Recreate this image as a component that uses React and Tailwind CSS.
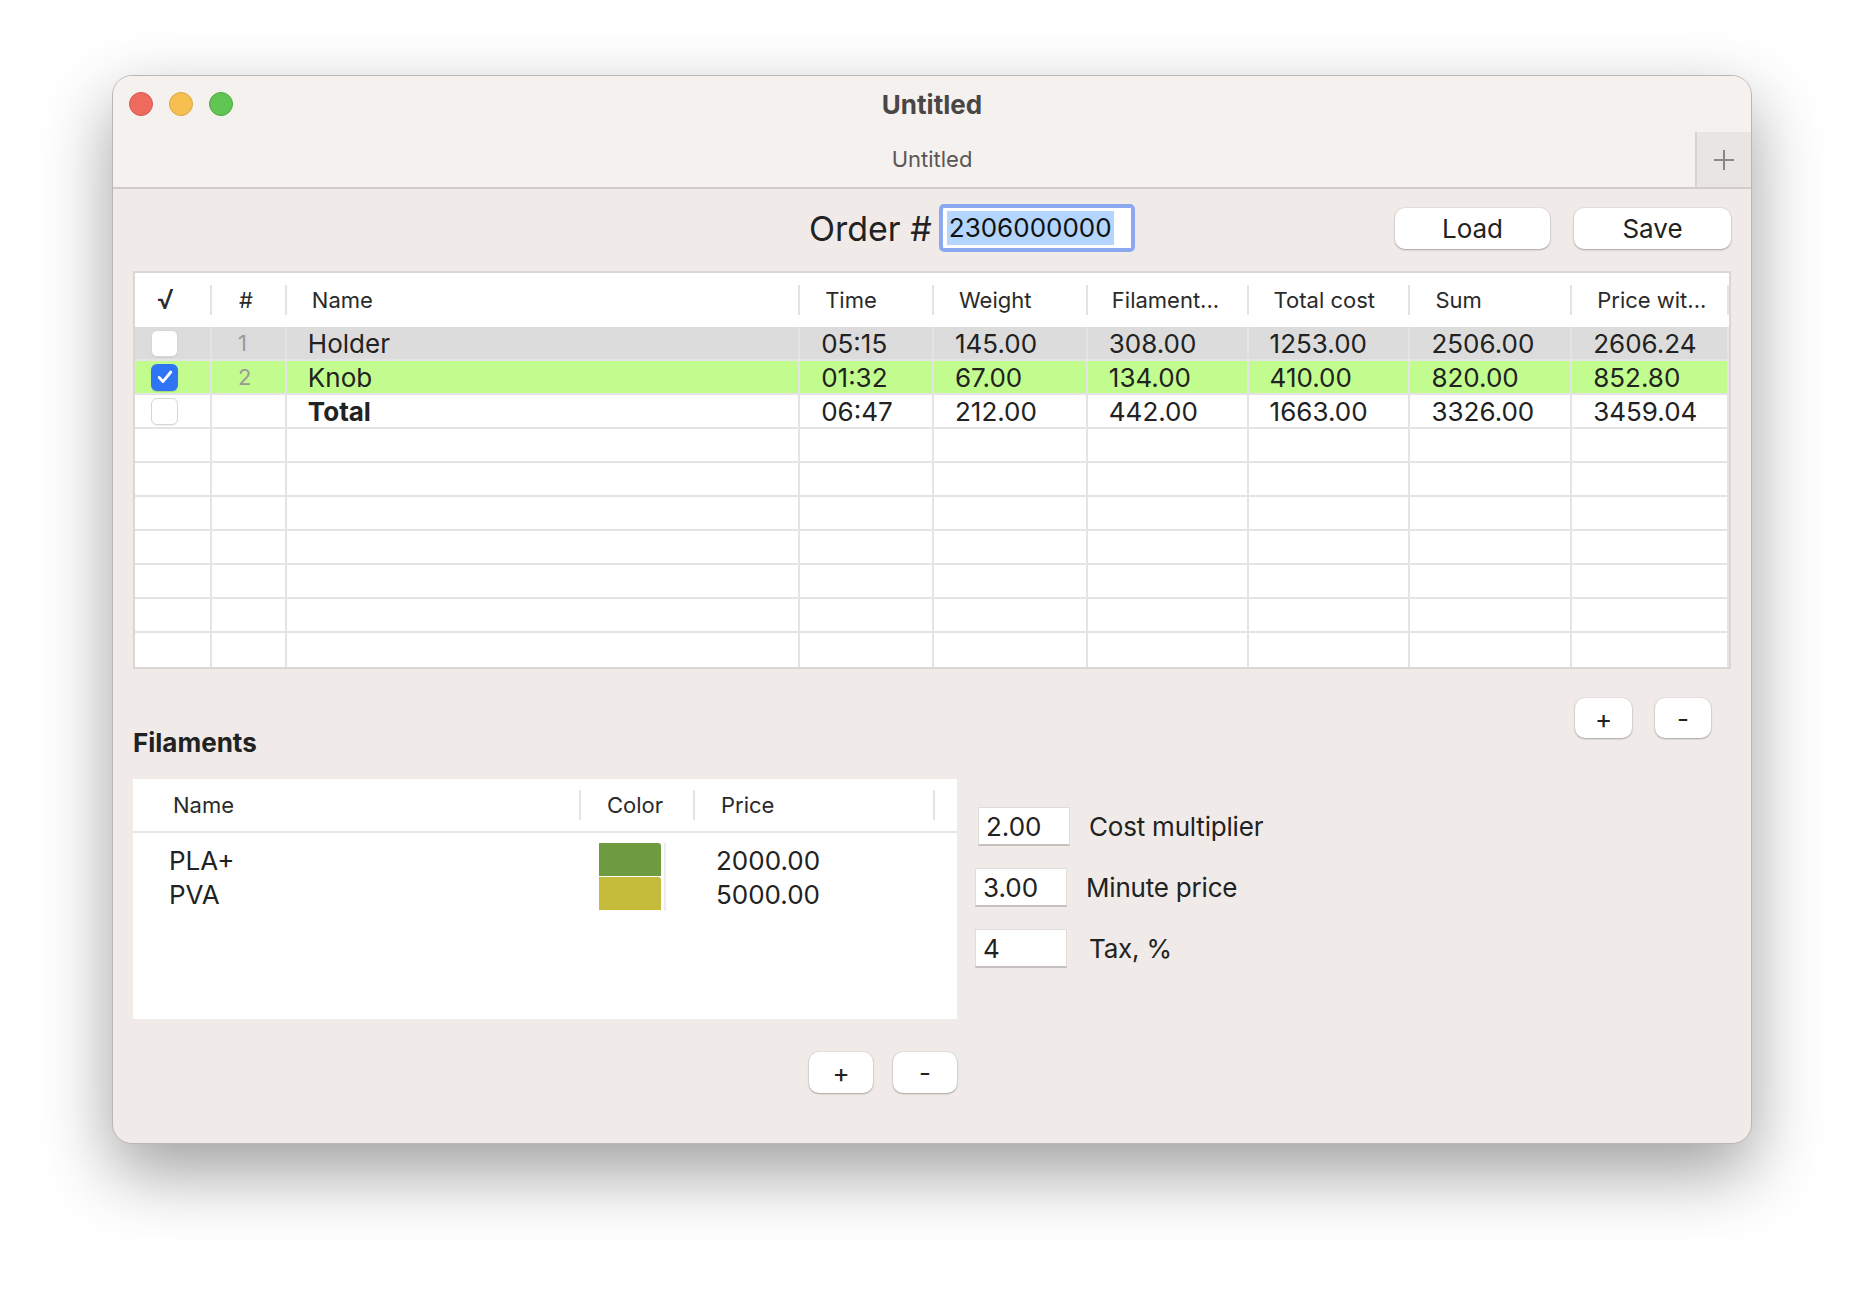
import React from 'react';

const columns = [
  { w: 'w-[77px]', label: '√', pl: 'pl-[22px] text-[27px] leading-[30px]' },
  { w: 'w-[75px]', label: '#', pl: 'pl-[27px] text-[22px]' },
  { w: 'w-[514px]', label: 'Name', pl: 'pl-[25px] text-[22px]' },
  { w: 'w-[134px]', label: 'Time', pl: 'pl-[25px] text-[22px]' },
  { w: 'w-[154px]', label: 'Weight', pl: 'pl-[25px] text-[22px]' },
  { w: 'w-[161px]', label: 'Filament...', pl: 'pl-[24px] text-[22px]' },
  { w: 'w-[162px]', label: 'Total cost', pl: 'pl-[25px] text-[22px]' },
  { w: 'w-[162px]', label: 'Sum', pl: 'pl-[25px] text-[22px]' },
  { w: 'w-[157px]', label: 'Price wit...', pl: 'pl-[25px] text-[22px]' },
];

const rows = [
  { n: 1, name: 'Holder', vals: ['05:15', '145.00', '308.00', '1253.00', '2506.00', '2606.24'], bg: 'bg-[#dcdcdc]', checked: false },
  { n: 2, name: 'Knob', vals: ['01:32', '67.00', '134.00', '410.00', '820.00', '852.80'], bg: 'bg-[#c3fc8e]', checked: true },
  { n: null, name: 'Total', bold: true, vals: ['06:47', '212.00', '442.00', '1663.00', '3326.00', '3459.04'], bg: 'bg-white', checked: false },
];

const filaments = [
  { name: 'PLA+', color: 'bg-[#6f9b40]', price: '2000.00' },
  { name: 'PVA', color: 'bg-[#c4bc3a]', price: '5000.00' },
];

const Checkbox = ({ checked }) =>
  checked ? (
    <div className="w-[27px] h-[27px] rounded-[6px] bg-[#2f74f5] flex items-center justify-center shadow-[0_1px_1px_rgba(0,0,0,0.15)]">
      <svg width="20" height="20" viewBox="0 0 24 24" fill="none">
        <path d="M5 12.5l4.5 5L19 6" stroke="white" strokeWidth="3.4" strokeLinecap="round" strokeLinejoin="round" />
      </svg>
    </div>
  ) : (
    <div className="w-[27px] h-[27px] rounded-[6px] bg-white border border-[#d6d6d6] shadow-[0_1px_1px_rgba(0,0,0,0.06)]" />
  );

const MacButton = ({ children, className }) => (
  <button className={`bg-white rounded-[10px] flex items-center justify-center text-[26px] text-[#222] shadow-[0_1px_2px_rgba(0,0,0,0.28),0_0_0_1px_rgba(0,0,0,0.04)] ${className}`}>
    {children}
  </button>
);

const ParamField = ({ value, label, shift, labelShift }) => (
  <div className={`flex items-center gap-[19px] ${shift}`}>
    <div className="w-[92px] h-[39px] bg-white border border-[#e0dcda] border-b-2 border-b-[#c6c1bf] flex items-center pl-[7px] text-[26px] text-[#222]">
      {value}
    </div>
    <span className={`text-[26px] text-[#222] tracking-[-0.2px] ${labelShift}`}>{label}</span>
  </div>
);

export default function App() {
  return (
    <div className="min-h-screen bg-white pt-[75px] pl-[112px] font-[family-name:Inter,sans-serif]">
      <div className="w-[1640px] h-[1069px] rounded-[20px] border border-[#bcb7b5] bg-[#f0ebe8] overflow-hidden shadow-[0_28px_70px_rgba(0,0,0,0.38)] flex flex-col">
        {/* title bar */}
        <div className="h-[56px] bg-[#f5f1ef] grid grid-cols-[1fr_auto_1fr] items-center">
          <div className="flex gap-[16px] pl-[16px]">
            <div className="w-[24px] h-[24px] rounded-full bg-[#ee6a5f] border border-[#d5594d]" />
            <div className="w-[24px] h-[24px] rounded-full bg-[#f6c050] border border-[#d9a443]" />
            <div className="w-[24px] h-[24px] rounded-full bg-[#61c554] border border-[#4fa83f]" />
          </div>
          <div className="text-[26px] font-bold text-[#4a4646]">Untitled</div>
          <div />
        </div>
        {/* tab bar */}
        <div className="h-[57px] flex bg-[#f5f1ef] border-b-2 border-[#d2cdcb]">
          <div className="flex-1 flex items-center justify-center pl-[56px] text-[22px] text-[#5b5656]">Untitled</div>
          <div className="w-[56px] bg-[#e9e5e3] border-l-2 border-[#d8d3d1] flex items-center justify-center">
            <svg width="24" height="24" viewBox="0 0 24 24">
              <path d="M12 2v20M2 12h20" stroke="#8a8686" strokeWidth="2" />
            </svg>
          </div>
        </div>

        <div className="px-[20px]">
          {/* order row */}
          <div className="flex items-center mt-[15px] h-[48px]">
            <div className="ml-[676px] flex items-center gap-[7px]">
              <span className="text-[34px] text-[#222]">Order #</span>
              <div className="w-[196px] h-[48px] rounded-[5px] border-[4px] border-[#8ca8ef] bg-white flex items-center pl-[4px]">
                <span className="bg-[#b4d5fd] text-[26px] text-[#111] px-[2px] leading-[34px]">2306000000</span>
              </div>
            </div>
            <div className="ml-auto flex gap-[24px]">
              <MacButton className="w-[155px] h-[41px]">Load</MacButton>
              <MacButton className="w-[157px] h-[41px]">Save</MacButton>
            </div>
          </div>

          {/* main table */}
          <div className="mt-[19px] border-2 border-[#dcd7d4] bg-white">
            <div className="flex h-[54px] items-center">
              {columns.map((c) => (
                <div key={c.label} className={`${c.w} h-full flex items-center`}>
                  <div className={`flex-1 text-[#2a2a2a] ${c.pl}`}>{c.label}</div>
                  <div className="w-[2px] h-[30px] bg-[#e4e4e4]" />
                </div>
              ))}
            </div>
            {rows.map((r, i) => (
              <div key={i} className={`flex h-[34px] border-b-2 border-[#e4e4e4] ${r.bg}`}>
                <div className={`${columns[0].w} border-r-2 border-[#e4e4e4] flex items-center pl-[16px]`}>
                  <Checkbox checked={r.checked} />
                </div>
                <div className={`${columns[1].w} border-r-2 border-[#e4e4e4] flex items-center pl-[26px] text-[22px] text-[#9a9a9a]`}>
                  {r.n}
                </div>
                <div className={`${columns[2].w} border-r-2 border-[#e4e4e4] flex items-center pl-[21px] text-[26px] text-[#222] ${r.bold ? 'font-bold' : ''}`}>
                  {r.name}
                </div>
                {r.vals.map((v, j) => (
                  <div key={j} className={`${columns[j + 3].w} border-r-2 border-[#e4e4e4] flex items-center pl-[21px] text-[26px] text-[#222]`}>
                    {v}
                  </div>
                ))}
              </div>
            ))}
            {[0, 1, 2, 3, 4, 5, 6].map((k) => (
              <div key={k} className={`flex h-[34px] ${k < 6 ? 'border-b-2 border-[#e4e4e4]' : ''}`}>
                {columns.map((c) => (
                  <div key={c.label} className={`${c.w} border-r-2 border-[#e4e4e4]`} />
                ))}
              </div>
            ))}
          </div>

          {/* row buttons */}
          <div className="flex justify-end gap-[23px] pr-[20px] mt-[29px]">
            <MacButton className="w-[57px] h-[40px]">+</MacButton>
            <MacButton className="w-[56px] h-[40px]">-</MacButton>
          </div>

          {/* filaments */}
          <div className="flex -mt-[11px]">
            <div className="w-[824px] flex flex-col">
              <div className="text-[26px] leading-[32px] font-bold text-[#222]">Filaments</div>
              <div className="mt-[20px] h-[240px] bg-white">
                <div className="flex h-[54px] items-center border-b-2 border-[#e6e6e6]">
                  <div className="w-[448px] h-full flex items-center">
                    <div className="flex-1 pl-[40px] text-[22px] text-[#2a2a2a]">Name</div>
                    <div className="w-[2px] h-[30px] bg-[#e4e4e4]" />
                  </div>
                  <div className="w-[114px] h-full flex items-center">
                    <div className="flex-1 pl-[26px] text-[22px] text-[#2a2a2a]">Color</div>
                    <div className="w-[2px] h-[30px] bg-[#e4e4e4]" />
                  </div>
                  <div className="w-[240px] h-full flex items-center">
                    <div className="flex-1 pl-[26px] text-[22px] text-[#2a2a2a]">Price</div>
                    <div className="w-[2px] h-[30px] bg-[#e4e4e4]" />
                  </div>
                </div>
                <div className="pt-[10px]">
                  {filaments.map((f) => (
                    <div key={f.name} className="flex h-[34px] items-center">
                      <div className="w-[448px] pl-[36px] text-[26px] text-[#222]">{f.name}</div>
                      <div className="w-[114px] h-full flex pl-[18px]">
                        <div className={`w-[62px] h-[33px] rounded-tr-[3px] ${f.color}`} />
                        <div className="w-[2px] h-full ml-[3px] bg-[#ececec]" />
                      </div>
                      <div className="pl-[21px] text-[26px] text-[#222]">{f.price}</div>
                    </div>
                  ))}
                </div>
              </div>
              <div className="flex justify-end gap-[20px] mt-[33px]">
                <MacButton className="w-[64px] h-[41px]">+</MacButton>
                <MacButton className="w-[64px] h-[41px]">-</MacButton>
              </div>
            </div>

            <div className="ml-[18px] mt-[80px] flex flex-col gap-[22px]">
              <ParamField value="2.00" label="Cost multiplier" shift="ml-[3px]" labelShift="" />
              <ParamField value="3.00" label="Minute price" shift="" labelShift="" />
              <ParamField value="4" label="Tax, %" shift="" labelShift="ml-[3px]" />
            </div>
          </div>
        </div>
      </div>
    </div>
  );
}
